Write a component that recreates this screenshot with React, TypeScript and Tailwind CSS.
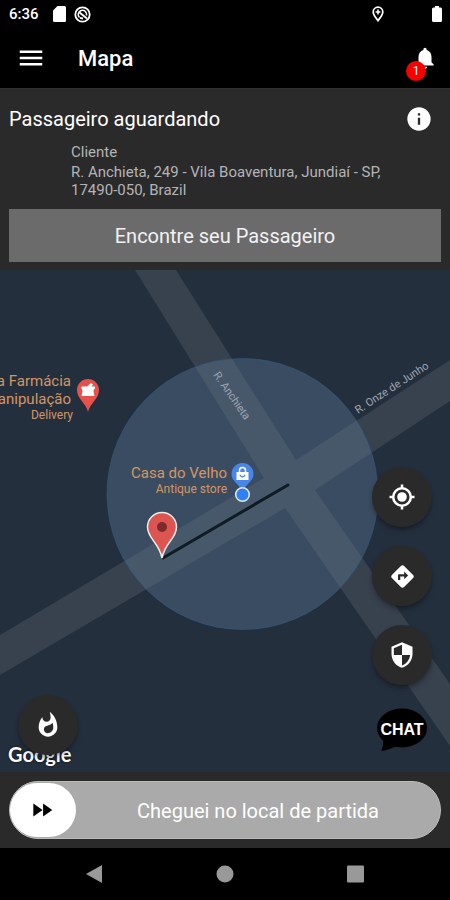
import { useState } from "react";
import type { ReactNode } from "react";
import {
  MdDirections,
  MdFastForward,
  MdInfo,
  MdMenu,
  MdNotifications,
  MdSecurity,
  MdWhatshot,
} from "react-icons/md";

function StatusBar() {
  return (
    <div className="flex h-7 items-center bg-black pr-2 pl-[9px] text-white">
      <span className="w-11 text-[15px] font-medium">6:36</span>
      <svg width="13" height="16" viewBox="0 0 13 16" fill="currentColor">
        <path d="M4.5 0H11.5Q13 0 13 1.5V14.5Q13 16 11.5 16H1.5Q0 16 0 14.5V4.5Z" />
      </svg>
      <svg className="ml-2" width="17" height="17" viewBox="0 0 17 17" fill="none" stroke="currentColor">
        <circle cx="8.5" cy="8.5" r="7.2" strokeWidth="1.8" />
        <path d="M5.5 11.5A4.2 4.2 0 1 1 12.5 9.5" strokeWidth="1.6" />
        <path d="M5.5 6.5L13 12.5M6 11.8L9 12.5" strokeWidth="1.8" />
      </svg>
      <svg className="ml-auto" width="12" height="16" viewBox="0 0 12 16" fill="none" stroke="currentColor">
        <path d="M6 14.6C3 11 1.2 8.4 1.2 6a4.8 4.8 0 0 1 9.6 0c0 2.4-1.8 5-4.8 8.6Z" strokeWidth="1.7" />
        <path d="M6 3.6V8.4M3.6 6H8.4" strokeWidth="1.6" />
      </svg>
      <svg className="ml-12" width="10" height="16" viewBox="0 0 10 16" fill="currentColor">
        <path d="M3 0H7V1.5H8.5Q10 1.5 10 3V14.5Q10 16 8.5 16H1.5Q0 16 0 14.5V3Q0 1.5 1.5 1.5H3Z" />
      </svg>
    </div>
  );
}

function Header() {
  return (
    <header className="flex h-15 items-center justify-between bg-black px-4 text-white">
      <div className="flex items-center gap-8">
        <button type="button" aria-label="Menu">
          <MdMenu size={30} />
        </button>
        <h1 className="pt-0.5 text-[22px] leading-7 font-medium">Mapa</h1>
      </div>
      <button type="button" aria-label="Notificações" className="relative -mr-1">
        <MdNotifications size={26} />
        <span className="absolute top-4 -left-1.5 flex size-5 items-center justify-center rounded-full bg-[#f60000] text-xs">
          1
        </span>
      </button>
    </header>
  );
}

function PassengerPanel() {
  return (
    <section className="border-t border-[#333] bg-[#2a2a2a] px-[9px] pt-3 pb-2 text-white">
      <div className="flex items-center justify-between pr-2">
        <h2 className="text-xl leading-9">Passageiro aguardando</h2>
        <button type="button" aria-label="Informações">
          <MdInfo size={28} />
        </button>
      </div>
      <div className="pt-1 pr-10 pl-[62px] text-[15px] text-[#b4b4b8]">
        <p className="leading-[22px]">Cliente</p>
        <p className="leading-[18px]">
          R. Anchieta, 249 - Vila Boaventura, Jundiaí - SP, 17490-050, Brazil
        </p>
      </div>
      <button
        type="button"
        className="mt-2.5 h-[53px] w-full bg-[#6b6b6b] text-xl text-[#f2f2f2]"
      >
        Encontre seu Passageiro
      </button>
    </section>
  );
}

function MapCanvas() {
  return (
    <svg
      className="absolute inset-0 size-full"
      viewBox="0 0 450 502"
      preserveAspectRatio="xMidYMid slice"
      fontFamily="Roboto, sans-serif"
    >
      <rect width="450" height="502" fill="#242f3e" />
      <g fill="#38414e">
        <path d="M135 0H176L296 190L450 90V131L315 220L450 414V476L285 238L0 405V365L264 208Z" />
      </g>
      <circle cx="242.500" cy="224" r="135.500" fill="#6385a2" fillOpacity="0.35" stroke="#2f5f8c" strokeOpacity="0.5" />

      <g fill="#9ca5b3" fontSize="11">
        <text transform="translate(213 105) rotate(55)">R. Anchieta</text>
        <text transform="translate(358 144) rotate(-33)">R. Onze de Junho</text>
      </g>

      <g fill="#d59563" textAnchor="end">
        <text x="71" y="116" fontSize="15">a Farmácia</text>
        <text x="71" y="134" fontSize="15">anipulação</text>
        <text x="73" y="149" fontSize="12">Delivery</text>
        <text x="227" y="208" fontSize="15">Casa do Velho</text>
        <text x="227" y="223" fontSize="12">Antique store</text>
      </g>

      {/* pharmacy pin */}
      <path d="M88 142C86 133 77 129 77 120A11 11 0 0 1 99 120C99 129 90 133 88 142Z" fill="#e4524b" />
      <path d="M81.500 116.500H87L91 113L93 114.500L91.500 116.500H95V119H94L93.500 121.500L94.500 126H81.500L82.500 121.500L82 119H81.500Z" fill="#fff" />

      {/* shop pin */}
      <path d="M242.500 222C240 214 231.500 212 231.500 204A11 11 0 0 1 253.500 204C253.500 212 245 214 242.500 222Z" fill="#4a86e8" />
      <path d="M236.500 202H248.500V210H236.500Z" fill="#fff" />
      <path d="M239.500 202V200.500A3 3 0 0 1 245.500 200.500V202" fill="none" stroke="#fff" strokeWidth="1.500" />
      <path d="M239.800 204.800Q242.500 208.800 245.200 204.800" fill="none" stroke="#4a86e8" strokeWidth="1.200" />

      <path d="M163 288L288 215" stroke="#0f1c22" strokeWidth="3" strokeLinecap="round" />
      <circle cx="242.500" cy="224.500" r="6.800" fill="#2f80f2" stroke="#dce6f2" strokeWidth="1.600" />

      {/* pickup marker */}
      <path
        d="M162 288C159 272 147.500 269 147.500 257A14.500 14.500 0 0 1 176.500 257C176.500 269 165 272 162 288Z"
        fill="#dc5550"
        stroke="#ececec"
        strokeWidth="1.500"
      />
      <circle cx="162" cy="257" r="5" fill="#7d2a2f" />
    </svg>
  );
}

function LocateIcon() {
  return (
    <svg width="26" height="26" viewBox="0 0 26 26" fill="none" stroke="currentColor" strokeWidth="2.5">
      <circle cx="13" cy="13" r="8.800" />
      <circle cx="13" cy="13" r="4.800" fill="currentColor" stroke="none" />
      <path d="M13 0.500V4.500M13 21.500V25.500M0.500 13H4.500M21.500 13H25.500" />
    </svg>
  );
}

function RoundButton({ label, children }: { label: string; children: ReactNode }) {
  return (
    <button
      type="button"
      aria-label={label}
      className="flex size-15 items-center justify-center rounded-full bg-[#2a2a2a] text-white shadow-md shadow-black/30"
    >
      {children}
    </button>
  );
}

function ChatButton() {
  return (
    <button type="button" className="relative mt-1 h-11 w-13">
      <svg className="absolute inset-0 size-full" viewBox="0 0 52 44">
        <ellipse cx="26" cy="20" rx="25" ry="19.500" fill="#000" />
        <path d="M7 30Q8 38 5 43Q14 42 22 37Z" fill="#000" />
      </svg>
      <span className="absolute inset-x-0 top-2.5 text-center font-['Liberation_Sans',sans-serif] text-base leading-6 font-bold text-white">
        CHAT
      </span>
    </button>
  );
}

function MapView() {
  return (
    <main className="relative flex-1 overflow-hidden bg-[#242f3e]">
      <MapCanvas />
      <span className="absolute bottom-1 left-2 font-['Lato',sans-serif] text-xl leading-7 font-bold text-white [text-shadow:0_0_2px_#000]">
        Google
      </span>
      <div className="absolute bottom-[17px] left-[18px]">
        <RoundButton label="Áreas quentes">
          <MdWhatshot size={28} />
        </RoundButton>
      </div>
      <div className="absolute right-[18px] bottom-5 flex flex-col items-center gap-[19px]">
        <RoundButton label="Minha localização">
          <LocateIcon />
        </RoundButton>
        <RoundButton label="Rotas">
          <MdDirections size={27} />
        </RoundButton>
        <RoundButton label="Segurança">
          <MdSecurity size={28} />
        </RoundButton>
        <ChatButton />
      </div>
    </main>
  );
}

function ArrivalSlider() {
  const [value, setValue] = useState(0);

  return (
    <section className="bg-[#2a2a2a] px-[9px] py-[9px]">
      <div className="relative h-[58px]">
        <input
          id="arrival"
          type="range"
          min={0}
          max={100}
          value={value}
          onChange={(e) => setValue(Number(e.target.value))}
          className="block h-full w-full appearance-none rounded-full border border-[#bbb] bg-[#aaa] [&::-webkit-slider-thumb]:h-[54px] [&::-webkit-slider-thumb]:w-[66px] [&::-webkit-slider-thumb]:appearance-none [&::-webkit-slider-thumb]:rounded-full [&::-webkit-slider-thumb]:bg-white"
        />
        <label
          htmlFor="arrival"
          className="pointer-events-none absolute inset-0 flex items-center justify-center pt-0.5 pl-[66px] text-xl text-white"
        >
          Cheguei no local de partida
        </label>
        <div className="pointer-events-none absolute inset-y-0 right-[66px] left-0">
          <div
            className="absolute inset-y-0 flex w-[66px] items-center justify-center text-black"
            style={{ left: `${value}%` }}
          >
            <MdFastForward size={26} />
          </div>
        </div>
      </div>
    </section>
  );
}

function NavBar() {
  return (
    <nav className="flex h-13 items-center justify-between bg-black px-[85px] text-[#999]">
      <button type="button" aria-label="Voltar">
        <svg width="18" height="20" viewBox="0 0 18 20" fill="currentColor">
          <path d="M17 1V19L1 10Z" />
        </svg>
      </button>
      <button type="button" aria-label="Início">
        <svg width="18" height="18" viewBox="0 0 18 18" fill="currentColor">
          <circle cx="9" cy="9" r="8.500" />
        </svg>
      </button>
      <button type="button" aria-label="Recentes">
        <svg width="18" height="18" viewBox="0 0 18 18" fill="currentColor">
          <rect width="17" height="17" y="0.500" rx="1" />
        </svg>
      </button>
    </nav>
  );
}

export default function App() {
  return (
    <div className="flex min-h-screen flex-col bg-black font-['Roboto',sans-serif]">
      <StatusBar />
      <Header />
      <PassengerPanel />
      <MapView />
      <ArrivalSlider />
      <NavBar />
    </div>
  );
}
